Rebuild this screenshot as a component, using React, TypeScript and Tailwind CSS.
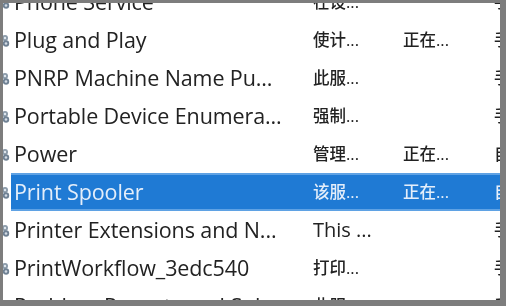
const rows = [
  { name: 'Phone Service', desc: '在设...', status: '', start: '手' },
  { name: 'Plug and Play', desc: '使计...', status: '正在...', start: '手' },
  { name: 'PNRP Machine Name Pu...', desc: '此服...', status: '', start: '手' },
  { name: 'Portable Device Enumera...', desc: '强制...', status: '', start: '手' },
  { name: 'Power', desc: '管理...', status: '正在...', start: '自' },
  { name: 'Print Spooler', desc: '该服...', status: '正在...', start: '自', selected: true },
  { name: 'Printer Extensions and N...', desc: 'This ...', status: '', start: '手', latin: true },
  { name: 'PrintWorkflow_3edc540', desc: '打印...', status: '', start: '手' },
  { name: 'Problem Reports and Sol...', desc: '此服...', status: '', start: '手' },
];

const GearIcon = () => (
  <svg width="10" height="16" viewBox="0 0 10 16" className="shrink-0">
    <circle cx="4" cy="6" r="3" fill="#8a99a8" />
    <circle cx="4" cy="6" r="1.2" fill="#dfe6ee" />
    <circle cx="5" cy="11.5" r="3.2" fill="#6f8193" />
    <circle cx="5" cy="11.5" r="1.3" fill="#d3dbe4" />
  </svg>
);

const App = () => {
  return (
    <div className="w-[506px] h-[306px] bg-[#7d7d7d] pt-[3px] pl-[3px] pr-[6px] pb-[6px]">
      <div className="w-full h-full bg-white overflow-hidden">
        <div
          className="mt-[-20px] flex flex-col blur-[0.4px]"
          style={{ fontFamily: '"Open Sans", "Noto Sans CJK SC", sans-serif' }}
        >
          {rows.map((r) => (
            <div key={r.name} className="flex items-center h-[38px] whitespace-nowrap">
              <div className="w-[8px] shrink-0 flex justify-end overflow-hidden">
                <GearIcon />
              </div>
              <div
                className={
                  'flex items-center h-full flex-1 ' +
                  (r.selected ? 'bg-[#1f7ad4] text-[#e4eefa] border-y-2 border-[#5fa2e4]' : 'text-[#222]')
                }
              >
                <div className="w-[302px] shrink-0 pl-[3px] text-[21.5px] font-medium tracking-[-0.1px] overflow-hidden">
                  {r.name}
                </div>
                <div className={'w-[90px] shrink-0 font-medium ' + (r.latin ? 'text-[20px]' : 'text-[16.5px]')}>
                  {r.desc}
                </div>
                <div className="w-[91px] shrink-0 text-[16.5px] font-medium">{r.status}</div>
                <div className="shrink-0 text-[16.5px] font-medium">{r.start}</div>
              </div>
            </div>
          ))}
        </div>
      </div>
    </div>
  );
};

export default App;
